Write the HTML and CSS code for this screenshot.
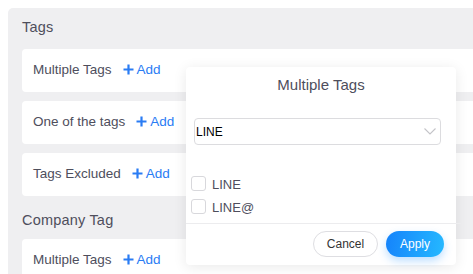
FILE: index.html
```html
<!DOCTYPE html>
<html>
<head>
<meta charset="utf-8">
<link rel="stylesheet" href="styles.css">
</head>
<body>
<div class="page">
  <div class="panel">
    <div class="group">
      <div class="group-title">Tags</div>
      <div class="cards">
        <div class="card"><span class="label">Multiple Tags</span><span class="add"><svg class="plus" viewBox="0 0 11 11"><path d="M5.5 0.5V10.5M0.5 5.5H10.5"/></svg>Add</span></div>
        <div class="card"><span class="label">One of the tags</span><span class="add"><svg class="plus" viewBox="0 0 11 11"><path d="M5.5 0.5V10.5M0.5 5.5H10.5"/></svg>Add</span></div>
        <div class="card"><span class="label">Tags Excluded</span><span class="add"><svg class="plus" viewBox="0 0 11 11"><path d="M5.5 0.5V10.5M0.5 5.5H10.5"/></svg>Add</span></div>
      </div>
    </div>
    <div class="group">
      <div class="group-title">Company Tag</div>
      <div class="cards">
        <div class="card"><span class="label">Multiple Tags</span><span class="add"><svg class="plus" viewBox="0 0 11 11"><path d="M5.5 0.5V10.5M0.5 5.5H10.5"/></svg>Add</span></div>
      </div>
    </div>
  </div>
</div>

<div class="popup">
  <div class="popup-title">Multiple Tags</div>
  <div class="select">
    <span class="select-value">LINE</span>
    <svg class="chevron" viewBox="0 0 12 7"><path d="M0.5 0.5L6 6L11.5 0.5"/></svg>
  </div>
  <div class="options">
    <label class="option"><span class="box"></span><span class="opt-label">LINE</span></label>
    <label class="option"><span class="box"></span><span class="opt-label">LINE@</span></label>
  </div>
  <div class="divider"></div>
  <div class="actions">
    <button class="btn btn-cancel">Cancel</button>
    <button class="btn btn-apply">Apply</button>
  </div>
</div>
</body>
</html>
```
FILE: styles.css
```css
html, body {
  margin: 0;
  padding: 0;
  background: #ffffff;
  overflow: hidden;
  font-family: "Liberation Sans", Arial, sans-serif;
}

.page {
  padding: 8px 0 0 8px;
  width: 560px;
}

.panel {
  background: #efeff1;
  border-radius: 5px 0 0 0;
  padding: 9px 0 20px 14px;
}

.group-title {
  font-size: 14.5px;
  line-height: 20px;
  letter-spacing: 0.2px;
  color: #4e4e5c;
  margin-bottom: 12px;
}

.group + .group .group-title {
  margin-top: 14px;
  margin-bottom: 9px;
}

.cards {
  display: flex;
  flex-direction: column;
  gap: 9px;
}

.card {
  height: 43px;
  box-sizing: border-box;
  background: #ffffff;
  border-radius: 4px;
  display: flex;
  align-items: center;
  padding: 0 0 3px 11px;
  font-size: 13.5px;
  color: #4e4e5c;
}

.label {
  margin-right: 11px;
}

.add {
  display: inline-flex;
  align-items: center;
  color: #2a7cf4;
}

.plus {
  width: 11px;
  height: 11px;
  margin-right: 3px;
  stroke: #2a7cf4;
  stroke-width: 2.2;
  fill: none;
}

.popup {
  position: absolute;
  left: 186px;
  top: 67px;
  width: 270px;
  height: 198px;
  box-sizing: border-box;
  background: #ffffff;
  border-radius: 4px;
  box-shadow: 0 2px 14px rgba(0, 0, 0, 0.09);
  padding-top: 8px;
  display: flex;
  flex-direction: column;
}

.popup-title {
  text-align: center;
  font-size: 15px;
  line-height: 20px;
  color: #4e4e5c;
}

.select {
  margin: 23px 15px 0 8px;
  height: 27px;
  box-sizing: border-box;
  border: 1px solid #dcdcdf;
  border-radius: 4px;
  display: flex;
  align-items: center;
  justify-content: space-between;
  padding: 0 4px 0 1px;
  font-size: 12px;
  color: #000000;
}

.chevron {
  width: 12px;
  height: 7px;
  stroke: #c4c4c8;
  stroke-width: 1.1;
  fill: none;
  margin-bottom: 1px;
}

.options {
  margin-top: 31px;
  padding-left: 5px;
  display: flex;
  flex-direction: column;
  gap: 8px;
}

.option {
  display: flex;
  align-items: center;
  height: 15px;
}

.box {
  width: 15px;
  height: 15px;
  box-sizing: border-box;
  border: 1px solid #d8d8dc;
  border-radius: 3px;
  background: #ffffff;
  margin-right: 6px;
}

.opt-label {
  font-size: 13px;
  color: #4e4e5c;
  padding-top: 2px;
}

.divider {
  height: 1px;
  background: #ececee;
  margin-top: 9px;
  margin-right: -5px;
}

.actions {
  margin-top: 7px;
  padding-right: 12px;
  display: flex;
  justify-content: flex-end;
  gap: 8px;
}

.btn {
  height: 26px;
  border-radius: 13px;
  font-family: "Liberation Sans", Arial, sans-serif;
  font-size: 12px;
  padding: 0;
  cursor: pointer;
}

.btn-cancel {
  width: 65px;
  background: #ffffff;
  border: 1px solid #dedee2;
  color: #333333;
}

.btn-apply {
  width: 58px;
  border: none;
  color: #ffffff;
  background: linear-gradient(100deg, #1583fb 0%, #25b9ff 100%);
  box-shadow: 0 4px 9px rgba(40, 150, 255, 0.3);
}
```
